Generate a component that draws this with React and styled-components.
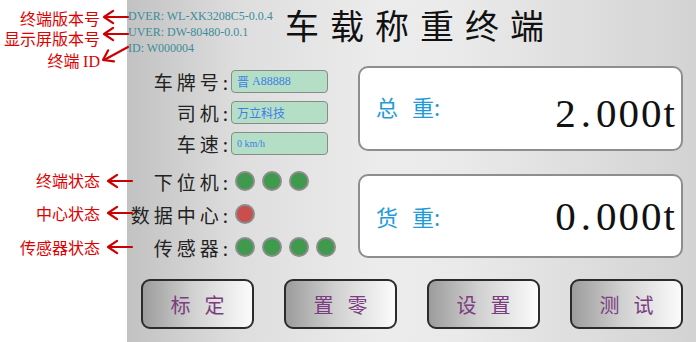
import React from 'react'
import styled, { createGlobalStyle } from 'styled-components'

const GlobalStyle = createGlobalStyle`
  html, body {
    margin: 0;
    padding: 0;
    background: #ffffff;
  }
  body {
    font-family: "Noto Sans CJK SC", "Noto Sans", sans-serif;
  }
`;

const Page = styled.div`
  width: 696px;
  height: 342px;
  display: flex;
  position: relative;
  overflow: hidden;
`;

const Notes = styled.div`
  width: 127px;
  flex-shrink: 0;
  display: flex;
  flex-direction: column;
  align-items: flex-end;
  padding-right: 27px;
  box-sizing: border-box;
`;

const Note = styled.div`
  margin-top: ${props => props.top}px;
  height: 20px;
  line-height: 20px;
  font-size: 16px;
  color: #e00000;
  white-space: nowrap;
  span {
    font-family: "Liberation Serif", serif;
  }
`;

const Panel = styled.div`
  flex: 1;
  height: 342px;
  display: flex;
  flex-direction: column;
  background: linear-gradient(90deg, #c2c2c2 0%, #dedede 20%, #ececec 45%, #eaeaea 58%, #d3d3d3 100%);
`;

const Header = styled.div`
  height: 58px;
  display: flex;
  padding-left: 1px;
`;

const Versions = styled.div`
  width: 157px;
  padding-top: 8px;
  font-family: "Liberation Serif", serif;
  font-size: 12px;
  line-height: 16px;
  color: #3d8c99;
  white-space: nowrap;
`;

const Title = styled.h1`
  margin: 0;
  font-size: 34px;
  line-height: normal;
  font-weight: 400;
  letter-spacing: 11px;
  color: #111;
  white-space: nowrap;
`;

const Body = styled.div`
  height: 200px;
  display: flex;
`;

const LeftCol = styled.div`
  flex: 1;
  padding-left: 3px;
  display: flex;
  flex-direction: column;
`;

const InfoList = styled.div`
  margin-top: 12px;
  display: flex;
  flex-direction: column;
  gap: 8px;
`;

const StatusList = styled.div`
  margin-top: 13px;
  display: flex;
  flex-direction: column;
  gap: 7px;
`;

const Row = styled.div`
  height: ${props => props.h}px;
  display: flex;
  align-items: center;
`;

const Label = styled.div`
  width: 102px;
  text-align: right;
  font-size: 19px;
  letter-spacing: 4px;
  color: #222;
  white-space: nowrap;
`;

const Field = styled.div`
  width: 90px;
  height: 21px;
  border: 1px solid #8a8a8a;
  border-radius: 4px;
  background: #b4dfc6;
  display: flex;
  align-items: center;
  padding-left: 5px;
  box-sizing: content-box;
  margin-left: -1px;
  font-family: "Liberation Serif", "Noto Sans CJK SC", serif;
  font-size: ${props => props.size}px;
  color: #3d7ee6;
  white-space: nowrap;
  span {
    font-family: "Noto Sans CJK SC", sans-serif;
  }
`;

const Lights = styled.div`
  display: flex;
  gap: 7px;
  margin-left: 3px;
`;

const Light = styled.div`
  width: 16px;
  height: 16px;
  border-radius: 50%;
  border: 2px solid #8c8c8c;
  background: ${props => props.red ? '#c94f4e' : '#3f9a4d'};
`;

const RightCol = styled.div`
  width: 325px;
  margin-right: 13px;
  display: flex;
  flex-direction: column;
  padding-top: 8px;
  gap: 23px;
`;

const Card = styled.div`
  height: ${props => props.h}px;
  box-sizing: border-box;
  border: 2px solid #8e8e8e;
  border-radius: 10px;
  background: #ffffff;
  display: flex;
  align-items: center;
  justify-content: space-between;
  padding: 0 4px 0 16px;
`;

const CardLabel = styled.div`
  font-size: 22px;
  color: #1f9bd8;
  margin-top: ${props => props.shift}px;
  span {
    margin-right: 14px;
  }
`;

const CardValue = styled.div`
  font-family: "Liberation Serif", serif;
  font-size: 41px;
  letter-spacing: 2px;
  color: #111;
  margin-top: ${props => props.shift}px;
`;

const Dot = styled.span`
  margin: 0 3px;
`;

const Footer = styled.div`
  margin-top: 21px;
  padding-left: 14px;
  display: flex;
  gap: 30px;
`;

const Button = styled.button`
  width: 113px;
  height: 50px;
  border: 2px solid #2b2b2b;
  border-radius: 9px;
  background: linear-gradient(90deg, #9c9c9c 0%, #d0d0d0 45%, #fbfbfb 100%);
  font-family: "Noto Sans CJK SC", sans-serif;
  font-size: 20px;
  letter-spacing: 14px;
  padding: 0 0 0 14px;
  color: #7b3c80;
  cursor: pointer;
`;

const Overlay = styled.svg`
  position: absolute;
  left: 0;
  top: 0;
  pointer-events: none;
`;

const arrows = [
  [128, 17, 104, 17],
  [128, 34, 104, 34],
  [128, 47, 103, 60],
  [132, 181, 108, 181],
  [132, 213, 108, 213],
  [132, 247, 108, 247],
];

const Arrow = ({ a }) => {
  const [x1, y1, x2, y2] = a;
  const len = Math.hypot(x1 - x2, y1 - y2);
  const ux = (x1 - x2) / len;
  const uy = (y1 - y2) / len;
  const ang = 0.6;
  const k = 11;
  const rot = (s) => [
    x2 + k * (ux * Math.cos(s * ang) - uy * Math.sin(s * ang)),
    y2 + k * (ux * Math.sin(s * ang) + uy * Math.cos(s * ang)),
  ];
  const p1 = rot(1);
  const p2 = rot(-1);
  return (
    <g>
      <line x1={x1} y1={y1} x2={x2 + 1} y2={y2} />
      <polyline points={`${p1[0]},${p1[1]} ${x2},${y2} ${p2[0]},${p2[1]}`} />
    </g>
  );
};

const App = () => {
  return (
    <Page>
      <GlobalStyle />
      <Notes>
        <Note top={8}>终端版本号</Note>
        <Note top={0}>显示屏版本号</Note>
        <Note top={2}>终端 <span>ID</span></Note>
        <Note top={100}>终端状态</Note>
        <Note top={13}>中心状态</Note>
        <Note top={14}>传感器状态</Note>
      </Notes>
      <Panel>
        <Header>
          <Versions>
            <div>DVER: WL-XK3208C5-0.0.4</div>
            <div>UVER: DW-80480-0.0.1</div>
            <div>ID: W000004</div>
          </Versions>
          <Title>车载称重终端</Title>
        </Header>
        <Body>
          <LeftCol>
            <InfoList>
              <Row h={23}>
                <Label>车牌号:</Label>
                <Field size={12}><span>晋</span>&nbsp;A88888</Field>
              </Row>
              <Row h={23}>
                <Label>司机:</Label>
                <Field size={12}><span>万立科技</span></Field>
              </Row>
              <Row h={23}>
                <Label>车速:</Label>
                <Field size={10}>0 km/h</Field>
              </Row>
            </InfoList>
            <StatusList>
              <Row h={26}>
                <Label>下位机:</Label>
                <Lights>
                  <Light /><Light /><Light />
                </Lights>
              </Row>
              <Row h={26}>
                <Label>数据中心:</Label>
                <Lights>
                  <Light red />
                </Lights>
              </Row>
              <Row h={26}>
                <Label>传感器:</Label>
                <Lights>
                  <Light /><Light /><Light /><Light />
                </Lights>
              </Row>
            </StatusList>
          </LeftCol>
          <RightCol>
            <Card h={85}>
              <CardLabel shift={-6}><span>总</span>重:</CardLabel>
              <CardValue shift={8}>2<Dot>.</Dot>000t</CardValue>
            </Card>
            <Card h={84}>
              <CardLabel shift={0}><span>货</span>重:</CardLabel>
              <CardValue shift={0}>0<Dot>.</Dot>000t</CardValue>
            </Card>
          </RightCol>
        </Body>
        <Footer>
          <Button>标定</Button>
          <Button>置零</Button>
          <Button>设置</Button>
          <Button>测试</Button>
        </Footer>
      </Panel>
      <Overlay width="696" height="342" fill="none" stroke="#cc0000" strokeWidth="2.2" strokeLinecap="round" strokeLinejoin="round">
        {arrows.map((a, i) => <Arrow key={i} a={a} />)}
      </Overlay>
    </Page>
  )
}

export default App
